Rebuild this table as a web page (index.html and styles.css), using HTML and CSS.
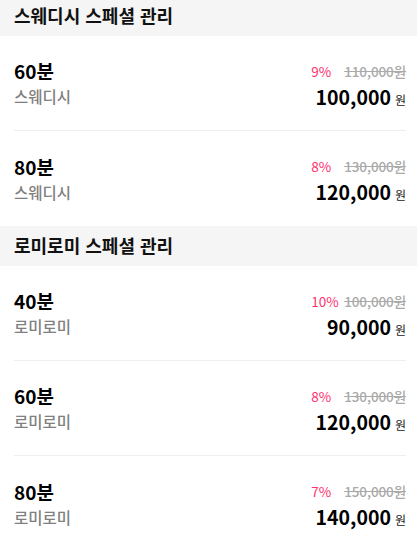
FILE: index.html
```html
<!DOCTYPE html>
<html lang="ko">
<head>
<meta charset="utf-8">
<link rel="stylesheet" href="styles.css">
</head>
<body>
<div class="page">
  <section class="group">
    <h2 class="group-title">스웨디시 스페셜 관리</h2>
    <div class="item">
      <div class="info"><div class="dur">60분</div><div class="kind">스웨디시</div></div>
      <div class="price">
        <div class="orig"><span class="pct">9%</span><span class="strike">110,000원</span></div>
        <div class="final"><span class="num">100,000</span><span class="won">원</span></div>
      </div>
    </div>
    <div class="item">
      <div class="info"><div class="dur">80분</div><div class="kind">스웨디시</div></div>
      <div class="price">
        <div class="orig"><span class="pct">8%</span><span class="strike">130,000원</span></div>
        <div class="final"><span class="num">120,000</span><span class="won">원</span></div>
      </div>
    </div>
  </section>
  <section class="group">
    <h2 class="group-title">로미로미 스페셜 관리</h2>
    <div class="item">
      <div class="info"><div class="dur">40분</div><div class="kind">로미로미</div></div>
      <div class="price">
        <div class="orig"><span class="pct">10%</span><span class="strike">100,000원</span></div>
        <div class="final"><span class="num">90,000</span><span class="won">원</span></div>
      </div>
    </div>
    <div class="item">
      <div class="info"><div class="dur">60분</div><div class="kind">로미로미</div></div>
      <div class="price">
        <div class="orig"><span class="pct">8%</span><span class="strike">130,000원</span></div>
        <div class="final"><span class="num">120,000</span><span class="won">원</span></div>
      </div>
    </div>
    <div class="item">
      <div class="info"><div class="dur">80분</div><div class="kind">로미로미</div></div>
      <div class="price">
        <div class="orig"><span class="pct">7%</span><span class="strike">150,000원</span></div>
        <div class="final"><span class="num">140,000</span><span class="won">원</span></div>
      </div>
    </div>
  </section>
</div>
</body>
</html>
```

FILE: styles.css
```css
html, body {
  margin: 0;
  padding: 0;
  background: #fff;
}
body {
  font-family: "Noto Sans CJK KR", "Noto Sans", sans-serif;
  color: #000;
}
.page {
  margin-top: -4px;
}
.group-title {
  margin: 0;
  background: #f5f5f5;
  padding: 7px 14px 8px;
  font-size: 18px;
  line-height: 25px;
  font-weight: 700;
  color: #111;
}
.item {
  margin: 0 11px 0 14px;
  height: 95px;
  box-sizing: border-box;
  display: flex;
  justify-content: space-between;
  align-items: center;
  border-bottom: 1px solid #efefef;
}
.item:last-child {
  border-bottom: none;
}
.info {
  display: flex;
  flex-direction: column;
}
.dur {
  font-size: 19px;
  line-height: 26px;
  font-weight: 700;
}
.kind {
  font-size: 15.5px;
  line-height: 24px;
  font-weight: 500;
  color: #808080;
}
.price {
  display: flex;
  flex-direction: column;
  align-items: flex-end;
}
.orig {
  display: flex;
  font-size: 13.5px;
  line-height: 26px;
}
.pct {
  width: 33px;
  color: #ff3370;
}
.strike {
  color: #aaa;
  font-weight: 500;
  letter-spacing: -0.1px;
  text-decoration: line-through;
}
.final {
  display: flex;
  align-items: baseline;
  height: 24px;
  padding-top: 1px;
}
.num {
  font-size: 19.5px;
  line-height: 24px;
  font-weight: 700;
}
.won {
  font-size: 12px;
  margin-left: 4px;
  color: #222;
}
```
